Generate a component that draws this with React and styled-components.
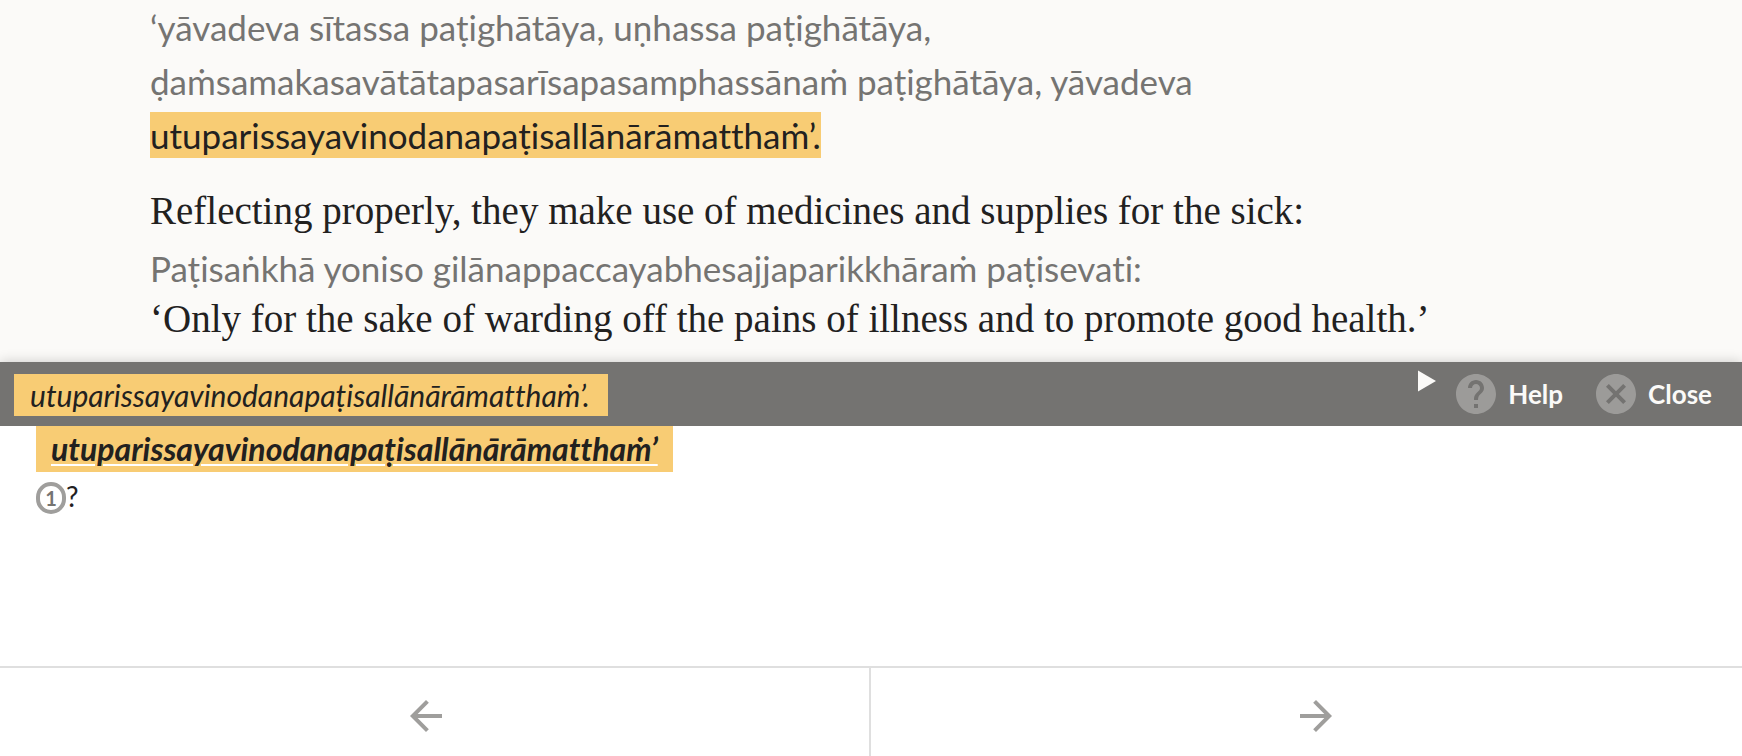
import React from "react";
import styled, { createGlobalStyle } from "styled-components";

const helpPath =
  "M12 2C6.48 2 2 6.48 2 12s4.48 10 10 10 10-4.48 10-10S17.52 2 12 2zm1 17h-2v-2h2v2zm2.07-7.75l-.9.92C13.45 12.9 13 13.5 13 15h-2v-.5c0-1.1.45-2.1 1.17-2.83l1.24-1.26c.37-.36.59-.86.59-1.41 0-1.1-.9-2-2-2s-2 .9-2 2H8c0-2.21 1.79-4 4-4s4 1.79 4 4c0 .88-.36 1.68-.93 2.25z";
const closePath =
  "M12 2C6.47 2 2 6.47 2 12s4.47 10 10 10 10-4.47 10-10S17.53 2 12 2zm5 13.59L15.59 17 12 13.41 8.41 17 7 15.59 10.59 12 7 8.41 8.41 7 12 10.59 15.59 7 17 8.41 13.41 12 17 15.59z";

function App() {
  return (
    <Page>
      <GlobalStyle />
      <Reader>
        <Segment>
          <Root lang="pi">
            ‘yāvadeva sītassa paṭighātāya, uṇhassa paṭighātāya,
            ḍaṁsamakasavātātapasarīsapasamphassānaṁ paṭighātāya, yāvadeva{" "}
            <Selected>utuparissayavinodanapaṭisallānārāmatthaṁ’.</Selected>
          </Root>
        </Segment>
        <Segment>
          <Translation>
            Reflecting properly, they make use of medicines and supplies for the sick:
          </Translation>
          <Root lang="pi" $compact>
            Paṭisaṅkhā yoniso gilānappaccayabhesajjaparikkhāraṁ paṭisevati:
          </Root>
          <Translation>
            ‘Only for the sake of warding off the pains of illness and to promote good health.’
          </Translation>
        </Segment>
      </Reader>

      <Sheet>
        <Bar>
          <Term lang="pi">utuparissayavinodanapaṭisallānārāmatthaṁ’.</Term>
          <Actions>
            <PlayButton aria-label="Play">
              <svg width="18" height="22" viewBox="0 0 18 22">
                <path d="M0 0.5L18 11L0 21.5z" fill="currentColor" />
              </svg>
            </PlayButton>
            <Action>
              <Icon viewBox="2 2 20 20">
                <path d={helpPath} />
              </Icon>
              Help
            </Action>
            <Action>
              <Icon viewBox="2 2 20 20">
                <path d={closePath} />
              </Icon>
              Close
            </Action>
          </Actions>
        </Bar>
        <Entry>
          <Headword href="#define" lang="pi">
            utuparissayavinodanapaṭisallānārāmatthaṁ’
          </Headword>
          <Meaning>
            <Badge>1</Badge>?
          </Meaning>
        </Entry>
        <Pager>
          <PageButton aria-label="Previous word">
            <svg width="48" height="48" viewBox="0 0 24 24" fill="currentColor">
              <path d="M20 11H7.83l5.59-5.59L12 4l-8 8 8 8 1.41-1.41L7.83 13H20v-2z" />
            </svg>
          </PageButton>
          <PageButton aria-label="Next word" $next>
            <svg width="48" height="48" viewBox="0 0 24 24" fill="currentColor">
              <path d="M12 4l-1.41 1.41L16.17 11H4v2h12.17l-5.58 5.59L12 20l8-8z" />
            </svg>
          </PageButton>
        </Pager>
      </Sheet>
    </Page>
  );
}

export default App;

const GlobalStyle = createGlobalStyle`
  * {
    box-sizing: border-box;
  }
  body {
    margin: 0;
    color: #22211f;
    background: #fbfaf8;
    font-family: Lato, "Noto Sans", sans-serif;
    font-variant-ligatures: none;
  }
  button {
    padding: 0;
    border: 0;
    background: none;
    color: inherit;
    font: inherit;
    cursor: pointer;
  }
  svg {
    display: block;
  }
`;
const Page = styled.div`
  display: flex;
  flex-direction: column;
  height: 100vh;
`;
const Reader = styled.main`
  flex: 1;
  min-height: 0;
  padding: 0 150px;
  overflow: hidden;
`;
const Segment = styled.section`
  max-width: 1300px;
  margin-bottom: 24px;
`;
const Root = styled.p`
  margin: ${(props) => (props.$compact ? "6px 0 0" : "0")};
  color: #757472;
  font-size: 35px;
  line-height: ${(props) => (props.$compact ? "52px" : "54px")};
`;
const Selected = styled.mark`
  padding: 2px 0;
  color: #22211f;
  background: #f8cc74;
`;
const Translation = styled.p`
  margin: 0;
  font-family: "Liberation Serif", serif;
  font-size: 39px;
  line-height: 50px;
  font-variant-ligatures: common-ligatures;
`;
const Sheet = styled.aside`
  position: relative;
  background: #fff;
  box-shadow: 0 0 12px rgba(0, 0, 0, 0.2);
`;
const Bar = styled.header`
  display: flex;
  justify-content: space-between;
  align-items: center;
  height: 64px;
  padding: 0 30px 0 14px;
  color: #fbfaf8;
  background: #747371;
`;
const Term = styled.span`
  margin-top: 2px;
  padding: 0 18px 0 16px;
  color: #22211f;
  background: #f8cc74;
  font-size: 30px;
  font-style: italic;
  line-height: 42px;
`;
const Actions = styled.div`
  display: flex;
  align-items: center;
  gap: 33px;
`;
const PlayButton = styled.button`
  align-self: flex-start;
  && {
    margin: -4px -13px 0 0;
  }
`;
const Action = styled.button`
  display: flex;
  align-items: center;
  gap: 12px;
  && {
    font-size: 26px;
    font-weight: 700;
    line-height: 40px;
  }
`;
const Icon = styled.svg`
  width: 40px;
  height: 40px;
  fill: #9c9b99;
`;
const Entry = styled.section`
  min-height: 240px;
  padding: 0 36px;
`;
const Headword = styled.a`
  display: block;
  width: fit-content;
  padding: 0 15px;
  color: #22211f;
  background: #f8cc74;
  font-size: 32px;
  font-style: italic;
  font-weight: 700;
  line-height: 46px;
  text-decoration: underline 2px #fff;
  text-underline-offset: 3px;
`;
const Meaning = styled.div`
  display: flex;
  margin-top: 10px;
  font-size: 28px;
  line-height: 28px;
`;
const Badge = styled.span`
  width: 30px;
  height: 32px;
  border: 4px solid #9f9e9c;
  border-radius: 15px;
  color: #757472;
  font-size: 20px;
  font-weight: 700;
  line-height: 24px;
  text-align: center;
`;
const Pager = styled.nav`
  display: grid;
  grid-template-columns: 1fr 1fr;
  border-top: 2px solid #dfdfdf;
`;
const PageButton = styled.button`
  display: flex;
  justify-content: center;
  align-items: center;
  height: 88px;
  && {
    padding: ${(props) => (props.$next ? "8px 0 0 18px" : "8px 18px 0 0")};
    border-right: ${(props) => (props.$next ? "0" : "2px solid #dfdfdf")};
    color: #9f9e9c;
  }
`;
